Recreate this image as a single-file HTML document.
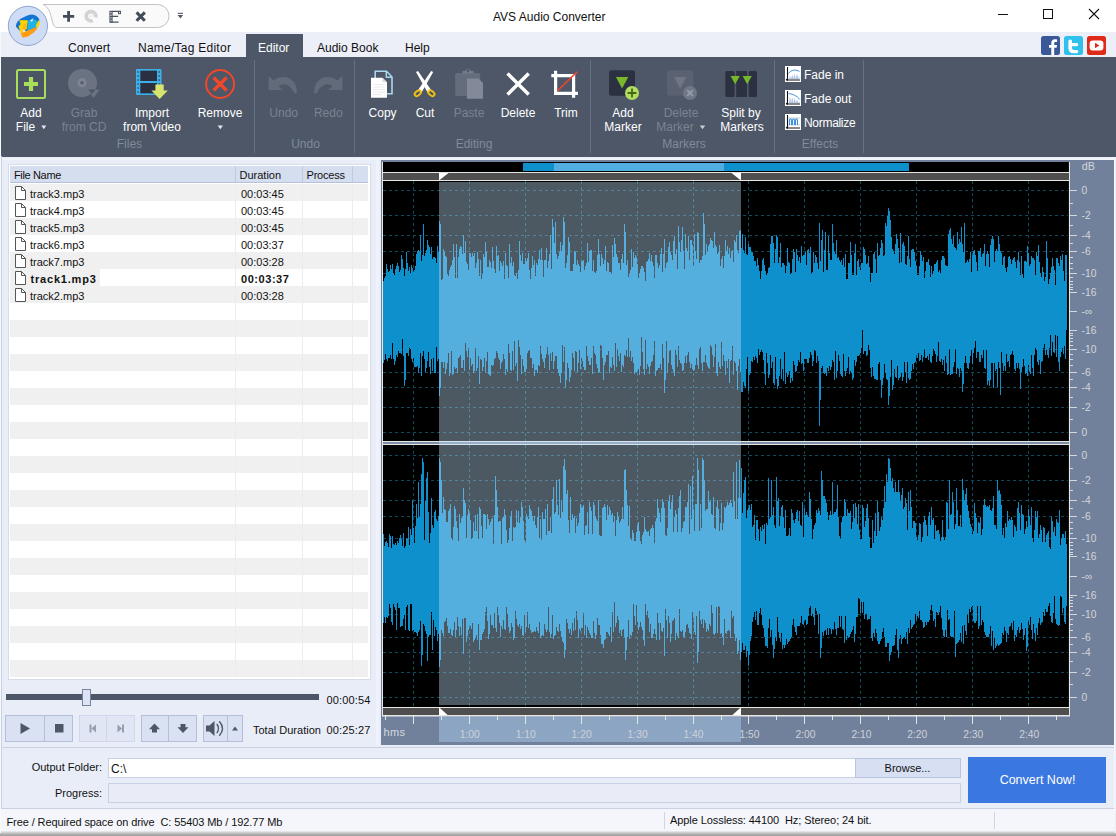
<!DOCTYPE html>
<html lang="en">
<head>
<meta charset="utf-8">
<title>AVS Audio Converter</title>
<style>
html,body{margin:0;padding:0;}
body{width:1116px;height:836px;overflow:hidden;background:#e9edf8;font-family:"Liberation Sans",sans-serif;font-size:11px;color:#111;position:relative;}
.abs{position:absolute;}
.t{position:absolute;white-space:nowrap;line-height:14px;}
#titlebar{left:0;top:0;width:1116px;height:32px;background:#ffffff;}
#tabbar{left:0;top:32px;width:1116px;height:25px;background:#eceef8;}
#ribbon{left:1px;top:57px;width:1115px;height:99.5px;background:#4d5767;}
.tab{position:absolute;top:41px;font-size:12px;line-height:14px;color:#111;white-space:nowrap;}
.rl{position:absolute;font-size:12px;line-height:14px;color:#fff;text-align:center;white-space:nowrap;transform:translateX(-50%);}
.rl.dis{color:#7b8291;}
.grp{position:absolute;top:137px;font-size:12px;line-height:14px;color:#828a9b;transform:translateX(-50%);white-space:nowrap;}
.sep{position:absolute;top:60px;width:1px;height:93px;background:#677082;}
.btn{position:absolute;top:715px;height:25px;background:#dae1f3;border:1px solid #b4bfdc;box-sizing:content-box;}
</style>
</head>
<body>
<div id="titlebar" class="abs"></div>
<div id="tabbar" class="abs"></div>
<div class="t" style="left:493px;top:9px;font-size:12px;line-height:16px;color:#111;">AVS Audio Converter</div>
<!-- window controls -->
<svg class="abs" style="left:990px;top:0" width="126" height="32" viewBox="0 0 126 32">
  <rect x="8" y="14" width="10" height="1" fill="#111"/>
  <rect x="53.5" y="9.5" width="9" height="9" fill="none" stroke="#111" stroke-width="1"/>
  <path d="M99 9 L109 19 M109 9 L99 19" stroke="#111" stroke-width="1.1" fill="none"/>
</svg>
<!-- quick access pill -->
<svg class="abs" style="left:0;top:0" width="200" height="58" viewBox="0 0 200 58">
  <path d="M43 4.5 H157.5 A11.5 11.5 0 0 1 157.5 27.5 H57 C52.8 27.5 52.6 21 50 12.6 C48.6 8.6 46 5.5 43 4.5 Z" fill="#fafafa" stroke="#c2c2c2" stroke-width="1"/>
  <!-- plus -->
  <path d="M63 16.4 H74.2 M68.6 11 V21.8" stroke="#444b59" stroke-width="2.8" fill="none"/>
  <!-- cd disabled -->
  <circle cx="91" cy="16.2" r="4.7" fill="none" stroke="#d3d3d3" stroke-width="3.8"/>
  <circle cx="91" cy="16.2" r="1" fill="#dcdcdc"/>
  <path d="M91 16.2 L99 18.2 L94.5 24.5 Z" fill="#fafafa"/>
  <!-- film -->
  <rect x="109.4" y="10.8" width="3.2" height="12" fill="#4a5161"/>
  <g fill="#e8e8ea"><rect x="110.3" y="12" width="1.3" height="1.3"/><rect x="110.3" y="14.6" width="1.3" height="1.3"/><rect x="110.3" y="17.2" width="1.3" height="1.3"/><rect x="110.3" y="19.8" width="1.3" height="1.3"/></g>
  <path d="M112 11.4 H120.6 M112 16.4 H118 M112 22.2 H118.6" stroke="#4a5161" stroke-width="1.2" fill="none"/>
  <rect x="118" y="11" width="3" height="3.2" fill="#4a5161"/>
  <rect x="119" y="12" width="1.1" height="1.2" fill="#e8e8ea"/>
  <!-- x -->
  <path d="M136.6 12.4 L144.8 20.8 M144.8 12.4 L136.6 20.8" stroke="#444b59" stroke-width="3" fill="none"/>
  <!-- dropdown -->
  <rect x="177.8" y="12.8" width="5.2" height="1.1" fill="#555b68"/>
  <path d="M177.6 15 H183.2 L180.4 18.6 Z" fill="#555b68"/>
  <!-- app button -->
  <circle cx="27.9" cy="25.9" r="19.6" fill="#cfdcf5" stroke="#8fa4c9" stroke-width="1"/>
  <path d="M16 26.8 C15.6 22 20 18.6 24.2 17 C27 15.2 29.4 14.4 31.8 14.4 C34.2 14.4 36 15.4 36.9 16.6 C38.4 17.6 39.2 18.8 39.4 20.2 L36 27.4 L27 31 L19.4 30.4 Z" fill="#1274d3"/>
  <path d="M28 20.9 L32.4 18.7 L37.7 20.9 L36 27.2 L27.2 30.6 Z" fill="#1fb4e8"/>
  <path d="M30.2 20.6 L33.4 18.2 L32 21.9 Z" fill="#eef6fb"/>
  <path d="M19.2 20.3 L27.8 20.2 L26.8 28.8 L23 32.2 L21 34.2 L18.6 26.5 L20.6 24 Z" fill="#ffd500"/>
  <path d="M20.7 33.8 L22.9 32.4 L27.2 30.7 L36 27.3 L37.7 28.3 L34.1 32.2 L28.1 36.4 L22.6 37.8 Z" fill="#ff9c10"/>
  <path d="M23.6 24 L26.9 23.6 L26.6 28.8 L23 32.2 L21.4 33.4 Z" fill="#ffb90a"/>
  <path d="M35.8 25.4 L38.4 20.4 L40.1 21 L39.4 25.2 L37.6 27.9 Z" fill="#ffd500"/>
  <path d="M22.2 31.8 L23.8 29 L25.2 31.7 Z" fill="#eef0ea"/>
</svg>
<!-- tabs -->
<div class="abs" style="left:246px;top:34px;width:57px;height:23px;background:#4d5767;"></div>
<div class="tab" style="left:68px;">Convert</div>
<div class="tab" style="left:138px;letter-spacing:0.25px;">Name/Tag Editor</div>
<div class="tab" style="left:258px;color:#fff;">Editor</div>
<div class="tab" style="left:317px;">Audio Book</div>
<div class="tab" style="left:405px;">Help</div>
<!-- social -->
<svg class="abs" style="left:1040px;top:35px" width="70" height="22" viewBox="0 0 70 22">
  <rect x="1" y="1" width="19" height="19" rx="2.5" fill="#3b5998"/>
  <path d="M14.2 20 V12.8 H16.6 L17 10 H14.2 V8.4 C14.2 7.5 14.6 7 15.6 7 H17.1 V4.4 C16.6 4.3 15.8 4.2 14.9 4.2 C12.7 4.2 11.3 5.5 11.3 7.9 V10 H9 V12.8 H11.3 V20 Z" fill="#fff"/>
  <rect x="24" y="1" width="19" height="19" rx="2.5" fill="#2fc1ee"/>
  <path d="M30 4.5 C31.2 4.5 32 5.3 32 6.5 V8 H36.5 C37.6 8 38.3 8.7 38.3 9.6 C38.3 10.5 37.6 11.2 36.5 11.2 H32 V13 C32 14.3 32.8 15 34 15 H36.5 C37.6 15 38.3 15.7 38.3 16.6 C38.3 17.5 37.6 18.2 36.5 18.2 H33.6 C30.4 18.2 28.4 16.4 28.4 13.2 V6.5 C28.4 5.3 29 4.5 30 4.5 Z" fill="#fff"/>
  <rect x="47" y="1" width="19" height="19" rx="2.5" fill="#de2a16"/>
  <rect x="49.6" y="5.6" width="13.8" height="9.8" rx="3" fill="#fff"/>
  <path d="M55 7.8 L59.4 10.5 L55 13.2 Z" fill="#de2a16"/>
</svg>
<div id="ribbon" class="abs" style="border-radius:0 0 0 1.5px;"></div>
<div class="sep" style="left:254px;"></div>
<div class="sep" style="left:354px;"></div>
<div class="sep" style="left:590px;"></div>
<div class="sep" style="left:774px;"></div>
<div class="sep" style="left:863px;"></div>
<svg class="abs" style="left:0;top:57px" width="900" height="99" viewBox="0 57 900 99">
  <!-- Add File -->
  <rect x="17" y="70" width="28" height="28" rx="1.5" fill="#4b5565" stroke="#a9de5c" stroke-width="2"/>
  <path d="M24 84 H38 M31 77 V91" stroke="#a9de5c" stroke-width="4.2" fill="none"/>
  <!-- Grab from CD (disabled) -->
  <path d="M82 69 A14 14 0 1 0 91.5 93.2 L88 89.5 L99.5 89.5 L93.5 98 L91 94.5 A14 14 0 0 0 82 69 Z" fill="#6b7383"/>
  <circle cx="82" cy="82.7" r="4.6" fill="#7d8595"/>
  <circle cx="82" cy="82.7" r="1.7" fill="#555d6e"/>
  <!-- Import from Video -->
  <rect x="136" y="69" width="25.5" height="26" rx="1" fill="#3eb1ea"/>
  <rect x="140.3" y="70.6" width="16.7" height="10.4" fill="#2a3040"/>
  <rect x="140.3" y="83" width="16.7" height="10.4" fill="#2a3040"/>
  <g fill="#2f6f95">
    <rect x="137.3" y="71" width="1.6" height="2"/><rect x="137.3" y="75" width="1.6" height="2"/><rect x="137.3" y="79" width="1.6" height="2"/><rect x="137.3" y="83" width="1.6" height="2"/><rect x="137.3" y="87" width="1.6" height="2"/><rect x="137.3" y="91" width="1.6" height="2"/>
    <rect x="158.4" y="71" width="1.6" height="2"/><rect x="158.4" y="75" width="1.6" height="2"/><rect x="158.4" y="79" width="1.6" height="2"/><rect x="158.4" y="83" width="1.6" height="2"/>
  </g>
  <path d="M155.4 84.4 H163.7 V90.6 H167.8 L159.6 99 L151.4 90.6 H155.4 Z" fill="#d9e46f"/>
  <!-- Remove -->
  <circle cx="220.1" cy="84" r="14" fill="none" stroke="#f1472a" stroke-width="2"/>
  <path d="M213.6 77.5 L226.6 90.5 M226.6 77.5 L213.6 90.5" stroke="#f1472a" stroke-width="3.4" fill="none"/>
  <!-- Undo / Redo (disabled) -->
  <path d="M268.6 76 L268.6 90 L283 90 L278.5 86.3 C283 82.5 289.5 84 293.5 92 C296 95 297 94 296.8 90 C296 79 284 72.5 273.5 80.5 Z" fill="#636b7b"/>
  <path d="M342.4 76 L342.4 90 L328 90 L332.5 86.3 C328 82.5 321.5 84 317.5 92 C315 95 314 94 314.2 90 C315 79 327 72.5 337.5 80.5 Z" fill="#636b7b"/>
  <!-- Copy -->
  <path d="M375.2 71.2 H386.5 L392 77 V93.7 H375.2 Z" fill="#4d5767" stroke="#a9d8f0" stroke-width="1.6"/>
  <path d="M386.3 71.5 V77.2 H391.8" fill="none" stroke="#a9d8f0" stroke-width="1.4"/>
  <path d="M371 77.7 H382.5 L387 82.3 V97.8 H371 Z" fill="#ffffff"/>
  <path d="M382.5 77.7 V82.3 H387 Z" fill="#d6dbe4"/>
  <g stroke="#e3e6ec" stroke-width="0.8"><path d="M373 84.5 H385 M373 87 H385 M373 89.5 H385 M373 92 H385 M373 94.5 H381"/></g>
  <!-- Cut -->
  <path d="M416 71.9 L418 71.1 L431.3 90.2 L427.6 92.5 Z" fill="#ffffff"/>
  <path d="M433.2 71.9 L431.2 71.1 L417.9 90.2 L421.6 92.5 Z" fill="#ffffff"/>
  <ellipse cx="417.8" cy="93.2" rx="2.2" ry="3.6" transform="rotate(50 417.8 93.2)" fill="none" stroke="#f2c20f" stroke-width="1.9"/>
  <ellipse cx="431.4" cy="93.2" rx="2.2" ry="3.6" transform="rotate(-50 431.4 93.2)" fill="none" stroke="#f2c20f" stroke-width="1.9"/>
  <!-- Paste (disabled) -->
  <rect x="455.2" y="73" width="25" height="23" rx="1.5" fill="#656d7d"/>
  <path d="M462.5 73.5 V71 H465 A3.2 3.2 0 0 1 471 71 H473.5 V73.5 Z" fill="#747c8c"/>
  <circle cx="468" cy="70.8" r="1.4" fill="#4d5767"/>
  <path d="M467 78.5 H478.5 L483 83 V98.7 H467 Z" fill="#828a9a"/>
  <!-- Delete -->
  <path d="M507.5 73.5 L528.7 94.5 M528.7 73.5 L507.5 94.5" stroke="#ffffff" stroke-width="3.4" fill="none"/>
  <!-- Trim -->
  <path d="M555.6 70.8 V93.4 H577.9 M551.3 75.7 H573.6 V97.8" stroke="#ffffff" stroke-width="3.2" fill="none"/>
  <path d="M557.6 90.6 L577.2 71.8" stroke="#f1452a" stroke-width="1.5" fill="none"/>
  <!-- Add marker -->
  <rect x="609" y="70.3" width="26" height="25.5" rx="2.2" fill="#2b3141"/>
  <path d="M615.9 77 H628.3 L622.1 88.5 Z" fill="#77b82a"/>
  <circle cx="632" cy="93" r="7" fill="#b3dc63"/>
  <path d="M627.6 93 H636.4 M632 88.6 V97.4" stroke="#3f6a12" stroke-width="1.8" fill="none"/>
  <!-- Delete marker (disabled) -->
  <rect x="667" y="70.3" width="26.5" height="25.5" rx="2.2" fill="#5a6272"/>
  <path d="M674 77 H686.4 L680.2 88.5 Z" fill="#6e7686"/>
  <circle cx="690" cy="93" r="7" fill="#6f7787"/>
  <path d="M687.2 90.2 L692.8 95.8 M692.8 90.2 L687.2 95.8" stroke="#959cab" stroke-width="1.8" fill="none"/>
  <!-- Split by markers -->
  <rect x="725.3" y="71" width="9.2" height="26" rx="1.5" fill="#2b3141"/>
  <rect x="736.2" y="71" width="10.8" height="26" fill="#2b3141"/>
  <rect x="748.7" y="71" width="8.3" height="26" rx="1.5" fill="#2b3141"/>
  <path d="M730.6 76 H739.8 L735.2 84.3 Z" fill="#77b82a"/>
  <path d="M742.6 76 H751.8 L747.2 84.3 Z" fill="#77b82a"/>
  <!-- Effects icons -->
  <g>
    <rect x="785" y="66" width="16" height="16" fill="#ffffff"/>
    <path d="M787.5 67 V80 H800" stroke="#111" stroke-width="1.1" fill="none"/>
    <path d="M785.7 79.8 L787.5 78 V81.5 Z" fill="#111"/>
    <path d="M788.5 73.5 C791 69.5 796 69.3 799.5 71.5" stroke="#3f8fe0" stroke-width="1" fill="none"/>
    <path d="M789 79 L790 76 L791 79 L792.2 74.5 L793.4 79 L794.6 73.5 L795.8 79 L797 73.5 L798.2 79 L799 75 L799.5 79 Z" fill="#a9c3e6"/>
  </g>
  <g>
    <rect x="785" y="90" width="16" height="16" fill="#ffffff"/>
    <path d="M787.5 91 V104 H800" stroke="#111" stroke-width="1.1" fill="none"/>
    <path d="M785.7 103.8 L787.5 102 V105.5 Z" fill="#111"/>
    <path d="M788.5 93.5 C792 94 797 95.5 799.8 99.5" stroke="#3f8fe0" stroke-width="1" fill="none"/>
    <path d="M789 103 L790 96 L791 103 L792.2 97 L793.4 103 L794.6 98 L795.8 103 L797 99.5 L798.2 103 L799 101 L799.5 103 Z" fill="#a9c3e6"/>
  </g>
  <g>
    <rect x="785" y="114" width="16" height="16" fill="#ffffff"/>
    <path d="M787.5 115 V128 H800" stroke="#111" stroke-width="1.1" fill="none"/>
    <path d="M785.7 127.8 L787.5 126 V129.5 Z" fill="#111"/>
    <path d="M788.5 118 H800 M788.5 125 H800" stroke="#8a8a8a" stroke-width="0.7" stroke-dasharray="1.2 0.8" fill="none"/>
    <path d="M789.5 125 V120 Q790.5 117.5 791.5 120 V125 M792.5 125 V120 Q793.5 117.5 794.5 120 V125 M795.5 125 V120 Q796.5 117.5 797.5 120 V125" stroke="#3f8fe0" stroke-width="1.1" fill="none"/>
  </g>
  <!-- dropdown arrows -->
  <path d="M41.3 125.4 H46.3 L43.8 129.2 Z" fill="#e6e8ee"/>
  <path d="M217.7 125.4 H222.9 L220.3 129.2 Z" fill="#e6e8ee"/>
  <path d="M699.8 125.4 H705.2 L702.5 129.2 Z" fill="#c9cdd6"/>
</svg>
<div class="rl" style="left:31px;top:106px;">Add</div>
<div class="rl" style="left:25.5px;top:120px;">File</div>
<div class="rl dis" style="left:84px;top:106px;">Grab</div>
<div class="rl dis" style="left:84px;top:120px;">from CD</div>
<div class="rl" style="left:152px;top:106px;">Import</div>
<div class="rl" style="left:152px;top:120px;">from Video</div>
<div class="rl" style="left:220px;top:106px;">Remove</div>
<div class="rl dis" style="left:283.7px;top:106px;">Undo</div>
<div class="rl dis" style="left:328.3px;top:106px;">Redo</div>
<div class="rl" style="left:382.6px;top:106px;">Copy</div>
<div class="rl" style="left:425px;top:106px;">Cut</div>
<div class="rl dis" style="left:469px;top:106px;">Paste</div>
<div class="rl" style="left:518px;top:106px;">Delete</div>
<div class="rl" style="left:566px;top:106px;">Trim</div>
<div class="rl" style="left:623px;top:106px;">Add</div>
<div class="rl" style="left:623px;top:120px;">Marker</div>
<div class="rl dis" style="left:681px;top:106px;">Delete</div>
<div class="rl dis" style="left:675px;top:120px;">Marker</div>
<div class="rl" style="left:741px;top:106px;">Split by</div>
<div class="rl" style="left:742px;top:120px;">Markers</div>
<div class="rl" style="left:804px;top:68px;transform:none;">Fade in</div>
<div class="rl" style="left:804px;top:92px;transform:none;">Fade out</div>
<div class="rl" style="left:804px;top:116px;transform:none;letter-spacing:-0.3px;">Normalize</div>
<div class="grp" style="left:129.4px;">Files</div>
<div class="grp" style="left:305.5px;">Undo</div>
<div class="grp" style="left:474px;">Editing</div>
<div class="grp" style="left:684px;">Markers</div>
<div class="grp" style="left:820px;">Effects</div>
<!-- file list -->
<div class="abs" style="left:8px;top:164px;width:363px;height:516px;background:#d7dceb;"></div>
<div class="abs" style="left:9px;top:165px;width:361px;height:514px;background:#ffffff;"></div>
<div class="abs" style="left:376px;top:160px;width:3px;height:585px;background:#eff2fa;"></div>
<div class="abs" style="left:10px;top:166px;width:358px;height:16px;background:#d5deef;border-bottom:1px solid #b4c0dc;"></div>
<div class="abs" style="left:10px;top:184px;width:358px;height:17px;background:#f0f0f0;"></div>
<div class="abs" style="left:10px;top:201px;width:358px;height:17px;background:#ffffff;"></div>
<div class="abs" style="left:10px;top:218px;width:358px;height:17px;background:#f0f0f0;"></div>
<div class="abs" style="left:10px;top:235px;width:358px;height:17px;background:#ffffff;"></div>
<div class="abs" style="left:10px;top:252px;width:358px;height:17px;background:#f0f0f0;"></div>
<div class="abs" style="left:10px;top:269px;width:358px;height:17px;background:#ffffff;"></div>
<div class="abs" style="left:10px;top:286px;width:358px;height:17px;background:#f0f0f0;"></div>
<div class="abs" style="left:10px;top:303px;width:358px;height:17px;background:#ffffff;"></div>
<div class="abs" style="left:10px;top:320px;width:358px;height:17px;background:#f0f0f0;"></div>
<div class="abs" style="left:10px;top:337px;width:358px;height:17px;background:#ffffff;"></div>
<div class="abs" style="left:10px;top:354px;width:358px;height:17px;background:#f0f0f0;"></div>
<div class="abs" style="left:10px;top:371px;width:358px;height:17px;background:#ffffff;"></div>
<div class="abs" style="left:10px;top:388px;width:358px;height:17px;background:#f0f0f0;"></div>
<div class="abs" style="left:10px;top:405px;width:358px;height:17px;background:#ffffff;"></div>
<div class="abs" style="left:10px;top:422px;width:358px;height:17px;background:#f0f0f0;"></div>
<div class="abs" style="left:10px;top:439px;width:358px;height:17px;background:#ffffff;"></div>
<div class="abs" style="left:10px;top:456px;width:358px;height:17px;background:#f0f0f0;"></div>
<div class="abs" style="left:10px;top:473px;width:358px;height:17px;background:#ffffff;"></div>
<div class="abs" style="left:10px;top:490px;width:358px;height:17px;background:#f0f0f0;"></div>
<div class="abs" style="left:10px;top:507px;width:358px;height:17px;background:#ffffff;"></div>
<div class="abs" style="left:10px;top:524px;width:358px;height:17px;background:#f0f0f0;"></div>
<div class="abs" style="left:10px;top:541px;width:358px;height:17px;background:#ffffff;"></div>
<div class="abs" style="left:10px;top:558px;width:358px;height:17px;background:#f0f0f0;"></div>
<div class="abs" style="left:10px;top:575px;width:358px;height:17px;background:#ffffff;"></div>
<div class="abs" style="left:10px;top:592px;width:358px;height:17px;background:#f0f0f0;"></div>
<div class="abs" style="left:10px;top:609px;width:358px;height:17px;background:#ffffff;"></div>
<div class="abs" style="left:10px;top:626px;width:358px;height:17px;background:#f0f0f0;"></div>
<div class="abs" style="left:10px;top:643px;width:358px;height:17px;background:#ffffff;"></div>
<div class="abs" style="left:10px;top:660px;width:358px;height:17px;background:#f0f0f0;"></div>
<div class="abs" style="left:10px;top:269px;width:90px;height:17px;background:#f0f0f0;"></div>
<div class="abs" style="left:235px;top:166px;width:1px;height:16px;background:#bfc9e2;"></div>
<div class="abs" style="left:235px;top:184px;width:1px;height:493px;background:#ececee;"></div>
<div class="abs" style="left:302px;top:166px;width:1px;height:16px;background:#bfc9e2;"></div>
<div class="abs" style="left:302px;top:184px;width:1px;height:493px;background:#ececee;"></div>
<div class="abs" style="left:352px;top:166px;width:1px;height:16px;background:#bfc9e2;"></div>
<div class="abs" style="left:352px;top:184px;width:1px;height:493px;background:#ececee;"></div>
<div class="t" style="left:14px;top:168px;letter-spacing:-0.35px;">File Name</div>
<div class="t" style="left:239.5px;top:168px;">Duration</div>
<div class="t" style="left:306.5px;top:168px;letter-spacing:-0.2px;">Process</div>
<svg class="abs" style="left:15px;top:186px" width="11" height="14" viewBox="0 0 11 14"><path d="M0.5 0.5 H6.5 L10.5 4.5 V13.5 H0.5 Z" fill="#fff" stroke="#555" stroke-width="1"/><path d="M6.5 0.5 V4.5 H10.5" fill="none" stroke="#555" stroke-width="1"/></svg>
<div class="t" style="left:30px;top:187px;">track3.mp3</div>
<div class="t" style="left:241px;top:187px;">00:03:45</div>
<svg class="abs" style="left:15px;top:203px" width="11" height="14" viewBox="0 0 11 14"><path d="M0.5 0.5 H6.5 L10.5 4.5 V13.5 H0.5 Z" fill="#fff" stroke="#555" stroke-width="1"/><path d="M6.5 0.5 V4.5 H10.5" fill="none" stroke="#555" stroke-width="1"/></svg>
<div class="t" style="left:30px;top:204px;">track4.mp3</div>
<div class="t" style="left:241px;top:204px;">00:03:45</div>
<svg class="abs" style="left:15px;top:220px" width="11" height="14" viewBox="0 0 11 14"><path d="M0.5 0.5 H6.5 L10.5 4.5 V13.5 H0.5 Z" fill="#fff" stroke="#555" stroke-width="1"/><path d="M6.5 0.5 V4.5 H10.5" fill="none" stroke="#555" stroke-width="1"/></svg>
<div class="t" style="left:30px;top:221px;">track5.mp3</div>
<div class="t" style="left:241px;top:221px;">00:03:45</div>
<svg class="abs" style="left:15px;top:237px" width="11" height="14" viewBox="0 0 11 14"><path d="M0.5 0.5 H6.5 L10.5 4.5 V13.5 H0.5 Z" fill="#fff" stroke="#555" stroke-width="1"/><path d="M6.5 0.5 V4.5 H10.5" fill="none" stroke="#555" stroke-width="1"/></svg>
<div class="t" style="left:30px;top:238px;">track6.mp3</div>
<div class="t" style="left:241px;top:238px;">00:03:37</div>
<svg class="abs" style="left:15px;top:254px" width="11" height="14" viewBox="0 0 11 14"><path d="M0.5 0.5 H6.5 L10.5 4.5 V13.5 H0.5 Z" fill="#fff" stroke="#555" stroke-width="1"/><path d="M6.5 0.5 V4.5 H10.5" fill="none" stroke="#555" stroke-width="1"/></svg>
<div class="t" style="left:30px;top:255px;">track7.mp3</div>
<div class="t" style="left:241px;top:255px;">00:03:28</div>
<svg class="abs" style="left:15px;top:271px" width="11" height="14" viewBox="0 0 11 14"><path d="M0.5 0.5 H6.5 L10.5 4.5 V13.5 H0.5 Z" fill="#fff" stroke="#555" stroke-width="1"/><path d="M6.5 0.5 V4.5 H10.5" fill="none" stroke="#555" stroke-width="1"/></svg>
<div class="t" style="left:30.5px;top:272px;font-weight:bold;letter-spacing:0.8px;">track1.mp3</div>
<div class="t" style="left:241px;top:272px;font-weight:bold;letter-spacing:0.55px;">00:03:37</div>
<svg class="abs" style="left:15px;top:288px" width="11" height="14" viewBox="0 0 11 14"><path d="M0.5 0.5 H6.5 L10.5 4.5 V13.5 H0.5 Z" fill="#fff" stroke="#555" stroke-width="1"/><path d="M6.5 0.5 V4.5 H10.5" fill="none" stroke="#555" stroke-width="1"/></svg>
<div class="t" style="left:30px;top:289px;">track2.mp3</div>
<div class="t" style="left:241px;top:289px;">00:03:28</div>
<!-- slider -->
<div class="abs" style="left:6px;top:694px;width:313px;height:6px;background:#4d5767;"></div>
<div class="abs" style="left:82px;top:689px;width:7px;height:15px;background:#dde4f5;border:1px solid #77839f;"></div>
<div class="t" style="left:326.5px;top:693px;letter-spacing:0.15px;">00:00:54</div>
<div class="t" style="left:253px;top:723px;">Total Duration</div>
<div class="t" style="left:326.5px;top:723px;letter-spacing:0.15px;">00:25:27</div>
<!-- buttons -->
<div class="btn" style="left:5px;width:38px;"></div>
<div class="btn" style="left:44px;width:27px;"></div>
<div class="btn" style="left:79px;width:26px;background:#e1e6f4;border-color:#d0d7ea;"></div>
<div class="btn" style="left:106px;width:26.5px;background:#e1e6f4;border-color:#d0d7ea;"></div>
<div class="btn" style="left:141px;width:26px;"></div>
<div class="btn" style="left:168px;width:27px;"></div>
<div class="btn" style="left:203px;width:23px;"></div>
<div class="btn" style="left:227px;width:14px;"></div>
<svg class="abs" style="left:0;top:710px" width="250" height="36" viewBox="0 710 250 36">
  <path d="M20.5 723 V734 L30 728.5 Z" fill="#4d5767"/>
  <rect x="55" y="724" width="8.5" height="8.5" fill="#4d5767"/>
  <path d="M89.5 724.5 H91.5 V732.5 H89.5 Z M96 724.5 V732.5 L91.5 728.5 Z" fill="#979eb1"/>
  <path d="M122 724.5 H124 V732.5 H122 Z M117.5 724.5 V732.5 L122 728.5 Z" fill="#979eb1"/>
  <path d="M154.5 723.5 L160 729.2 H157 V732.5 H152 V729.2 H149 Z" fill="#4d5767"/>
  <path d="M183 733 L188.5 727.3 H185.5 V724 H180.5 V727.3 H177.5 Z" fill="#4d5767"/>
  <path d="M206 725.5 H209.5 L214.5 721 V736 L209.5 731.5 H206 Z" fill="#4d5767"/>
  <path d="M216.8 724 Q220.2 728.5 216.8 733 M219.3 721.2 Q225.6 728.5 219.3 735.8" stroke="#4d5767" stroke-width="1.4" fill="none"/>
  <path d="M232 730.5 H238 L235 726.5 Z" fill="#4d5767"/>
</svg>
<!-- bottom panel -->
<div class="abs" style="left:2px;top:747px;width:1112px;height:1px;background:#c9d0e2;"></div>
<div class="abs" style="left:2px;top:808px;width:1112px;height:1px;background:#c9d0e2;"></div>
<div class="t" style="right:1014px;top:760px;font-size:11px;">Output Folder:</div>
<div class="t" style="right:1014px;top:786px;font-size:11px;">Progress:</div>
<div class="abs" style="left:108px;top:758px;width:746px;height:18px;background:#fff;border:1px solid #c9d0e4;"></div>
<div class="t" style="left:111px;top:762px;font-size:12px;">C:\</div>
<div class="abs" style="left:855px;top:758px;width:104px;height:18px;background:#d7dff2;border:1px solid #b9c4e0;"></div>
<div class="t" style="left:907.5px;top:761px;transform:translateX(-50%);">Browse...</div>
<div class="abs" style="left:108px;top:783px;width:851px;height:18px;background:#e9ecf6;border:1px solid #c9d0e4;"></div>
<div class="abs" style="left:968px;top:757px;width:138px;height:46px;background:#3a77e0;"></div>
<div class="t" style="left:1037.5px;top:773px;transform:translateX(-50%);font-size:12.5px;color:#fff;">Convert Now!</div>
<!-- status bar -->
<div class="abs" style="left:0;top:809px;width:1116px;height:24px;background:#f5f6fb;"></div>
<div class="abs" style="left:0;top:831px;width:1116px;height:5px;background:linear-gradient(#eeeef1,#b8b8ba 55%,#9a9a9a);"></div>
<div class="abs" style="left:664px;top:812px;width:1px;height:17px;background:#d2d6e4;"></div>
<div class="abs" style="left:994px;top:812px;width:1px;height:17px;background:#d2d6e4;"></div>
<div class="t" style="left:6.5px;top:815px;font-size:11px;letter-spacing:-0.1px;">Free / Required space on drive&nbsp; C: 55403 Mb / 192.77 Mb</div>
<div class="t" style="left:670px;top:813px;font-size:11px;letter-spacing:-0.08px;">Apple Lossless: 44100&nbsp; Hz; Stereo; 24 bit.</div>
<!-- window side borders -->
<div class="abs" style="left:2px;top:157px;width:1112px;height:3px;background:linear-gradient(#e9ecf7,#f4f6fc);"></div>
<div class="abs" style="left:0;top:32px;width:1px;height:801px;background:#f8f9fd;"></div>
<div class="abs" style="left:1px;top:156px;width:1px;height:653px;background:#c9d0e2;"></div>
<div class="abs" style="left:1114px;top:157px;width:1px;height:652px;background:#f6f7fc;"></div>
<div class="abs" style="left:1115px;top:157px;width:1px;height:676px;background:#eef0f8;"></div>
<!-- waveform editor -->
<svg class="abs" style="left:381px;top:160px" width="733" height="585" viewBox="381 160 733 585" shape-rendering="crispEdges" font-family="Liberation Sans, sans-serif">
<rect x="381" y="160" width="733" height="585" fill="#71819c"/>
<rect x="382" y="162" width="688" height="554" fill="#e8e6e2"/>
<rect x="1068" y="162" width="1" height="554" fill="#141414"/>
<rect x="1068" y="172" width="1" height="1" fill="#e8e6e2"/>
<rect x="1068" y="173" width="1" height="7" fill="#4f4f4f"/>
<rect x="1068" y="180" width="1" height="1" fill="#e8e6e2"/>
<rect x="1068" y="441" width="1" height="1" fill="#e6e4e0"/>
<rect x="1068" y="442" width="1" height="2" fill="#7f8eab"/>
<rect x="1068" y="444" width="1" height="1" fill="#e6e4e0"/>
<rect x="1068" y="707" width="1" height="1" fill="#e8e6e2"/>
<rect x="1068" y="708" width="1" height="7" fill="#4f4f4f"/>
<rect x="1068" y="715" width="1" height="1" fill="#e8e6e2"/>
<rect x="383" y="162" width="685" height="10" fill="#000"/>
<rect x="523" y="163" width="386" height="8" fill="#0e90cd"/>
<rect x="554" y="163" width="170" height="8" fill="#52aee1"/>
<rect x="383" y="173" width="685" height="7" fill="#4f4f4f"/>
<rect x="383" y="181" width="685" height="260" fill="#000"/>
<rect x="383" y="441" width="685" height="4" fill="#e6e4e0"/>
<rect x="383" y="442" width="685" height="2" fill="#7f8eab"/>
<rect x="383" y="445" width="685" height="262" fill="#000"/>
<rect x="383" y="708" width="685" height="7" fill="#4f4f4f"/>
<path d="M383 190.5H1068M383 432.5H1068M383 215.5H1068M383 407.5H1068M383 235.5H1068M383 387.5H1068M383 251.5H1068M383 372.5H1068M383 273.5H1068M383 349.5H1068M383 455.5H1068M383 697.5H1068M383 480.5H1068M383 672.5H1068M383 500.5H1068M383 652.5H1068M383 516.5H1068M383 637.5H1068M383 538.5H1068M383 614.5H1068M413.5 181V441M413.5 445V707M469.5 181V441M469.5 445V707M525.5 181V441M525.5 445V707M581.5 181V441M581.5 445V707M637.5 181V441M637.5 445V707M693.5 181V441M693.5 445V707M748.5 181V441M748.5 445V707M804.5 181V441M804.5 445V707M860.5 181V441M860.5 445V707M916.5 181V441M916.5 445V707M972.5 181V441M972.5 445V707M1028.5 181V441M1028.5 445V707" stroke="#0e495d" stroke-width="1" stroke-dasharray="3 3" fill="none"/>
<path d="M383 281V281H384V278H385V276H386V264H387V269H388V272H389V271H390V265H391V269H392V264H393V273H394V275H395V269H396V266H397V263H398V266H399V272H400V270H401V255H402V259H403V268H404V276H405V269H406V252H407V263H408V271H409V267H410V273H411V265H412V268H413V272H414V270H415V266H416V254H417V251H418V250H419V251H420V235H421V261H422V255H423V224H424V256H425V253H426V250H427V240H428V245H429V247H430V254H431V247H432V259H433V257H434V257H435V258H436V263H437V246H438V252H439V221H440V224H441V280H442V279H443V249H444V252H445V256H446V257H447V274H448V276H449V270H450V267H451V265H452V260H453V244H454V257H455V278H456V244H457V278H458V257H459V249H460V246H461V247H462V254H463V235H464V253H465V241H466V262H467V264H468V270H469V253H470V253H471V257H472V253H473V256H474V253H475V268H476V263H477V252H478V259H479V276H480V260H481V279H482V274H483V254H484V257H485V242H486V252H487V267H488V267H489V260H490V262H491V268H492V247H493V261H494V269H495V273H496V246H497V256H498V255H499V271H500V261H501V263H502V266H503V261H504V279H505V253H506V265H507V266H508V278H509V244H510V263H511V257H512V266H513V262H514V275H515V276H516V273H517V279H518V270H519V241H520V255H521V261H522V253H523V264H524V264H525V258H526V261H527V258H528V253H529V270H530V279H531V268H532V256H533V265H534V260H535V276H536V263H537V265H538V259H539V250H540V260H541V248H542V260H543V277H544V260H545V260H546V248H547V268H548V261H549V254H550V235H551V269H552V219H553V227H554V243H555V222H556V254H557V259H558V256H559V252H560V242H561V251H562V245H563V217H564V222H565V268H566V263H567V255H568V237H569V242H570V271H571V271H572V271H573V264H574V251H575V252H576V265H577V260H578V264H579V266H580V272H581V261H582V261H583V260H584V270H585V266H586V263H587V243H588V262H589V251H590V250H591V250H592V271H593V260H594V272H595V273H596V271H597V255H598V239H599V254H600V266H601V254H602V258H603V264H604V260H605V246H606V271H607V262H608V263H609V272H610V272H611V274H612V245H613V257H614V238H615V244H616V254H617V257H618V263H619V263H620V270H621V259H622V254H623V263H624V224H625V232H626V265H627V260H628V277H629V274H630V270H631V249H632V267H633V252H634V258H635V255H636V257H637V264H638V278H639V273H640V269H641V266H642V266H643V268H644V272H645V281H646V262H647V261H648V259H649V253H650V261H651V255H652V262H653V266H654V278H655V255H656V255H657V263H658V268H659V265H660V254H661V248H662V272H663V254H664V239H665V268H666V263H667V262H668V247H669V242H670V252H671V255H672V260H673V241H674V236H675V254H676V249H677V269H678V226H679V242H680V252H681V240H682V227H683V251H684V269H685V234H686V248H687V251H688V236H689V260H690V240H691V240H692V245H693V266H694V234H695V251H696V259H697V232H698V233H699V263H700V260H701V260H702V256H703V213H704V224H705V255H706V244H707V252H708V246H709V244H710V238H711V240H712V241H713V248H714V232H715V245H716V247H717V254H718V252H719V245H720V266H721V259H722V256H723V268H724V256H725V240H726V251H727V246H728V254H729V248H730V258H731V251H732V250H733V262H734V240H735V242H736V235H737V250H738V253H739V231H740V230H741V248H742V234H743V250H744V253H745V237H746V254H747V255H748V244H749V247H750V247H751V252H752V252H753V256H754V261H755V261H756V266H757V258H758V265H759V271H760V279H761V271H762V260H763V258H764V265H765V271H766V275H767V273H768V268H769V267H770V244H771V236H772V236H773V243H774V263H775V249H776V235H777V237H778V263H779V257H780V243H781V267H782V263H783V263H784V265H785V273H786V266H787V248H788V262H789V263H790V274H791V273H792V259H793V249H794V252H795V272H796V249H797V255H798V261H799V257H800V263H801V246H802V256H803V255H804V255H805V252H806V265H807V250H808V249H809V253H810V247H811V274H812V272H813V252H814V263H815V255H816V257H817V263H818V269H819V223H820V261H821V240H822V230H823V272H824V250H825V232H826V270H827V270H828V236H829V253H830V260H831V260H832V224H833V243H834V252H835V254H836V240H837V258H838V257H839V260H840V262H841V260H842V265H843V258H844V267H845V254H846V279H847V279H848V263H849V263H850V242H851V255H852V275H853V275H854V253H855V244H856V275H857V261H858V259H859V267H860V270H861V263H862V263H863V247H864V249H865V255H866V264H867V263H868V256H869V267H870V282H871V273H872V273H873V254H874V252H875V259H876V273H877V243H878V256H879V255H880V248H881V240H882V243H883V256H884V255H885V223H886V226H887V216H888V208H889V211H890V220H891V237H892V249H893V251H894V254H895V244H896V234H897V239H898V248H899V263H900V233H901V262H902V244H903V242H904V246H905V264H906V265H907V256H908V236H909V259H910V267H911V250H912V249H913V249H914V252H915V261H916V266H917V275H918V275H919V266H920V251H921V255H922V261H923V257H924V278H925V271H926V262H927V262H928V259H929V265H930V277H931V266H932V274H933V271H934V264H935V264H936V262H937V260H938V272H939V270H940V273H941V260H942V256H943V256H944V258H945V265H946V266H947V266H948V234H949V230H950V228H951V239H952V244H953V236H954V247H955V248H956V250H957V232H958V244H959V239H960V242H961V227H962V244H963V252H964V223H965V263H966V262H967V260H968V262H969V259H970V252H971V272H972V255H973V251H974V250H975V255H976V262H977V271H978V251H979V251H980V248H981V257H982V254H983V253H984V244H985V266H986V254H987V251H988V254H989V267H990V245H991V239H992V236H993V239H994V262H995V251H996V249H997V251H998V236H999V244H1000V251H1001V253H1002V265H1003V257H1004V256H1005V268H1006V272H1007V267H1008V257H1009V256H1010V259H1011V264H1012V260H1013V258H1014V257H1015V262H1016V268H1017V260H1018V252H1019V262H1020V275H1021V256H1022V274H1023V278H1024V261H1025V261H1026V262H1027V246H1028V253H1029V266H1030V264H1031V256H1032V258H1033V258H1034V260H1035V275H1036V252H1037V256H1038V245H1039V262H1040V273H1041V277H1042V267H1043V272H1044V281H1045V277H1046V241H1047V258H1048V284H1049V279H1050V273H1051V267H1052V258H1053V266H1054V270H1055V285H1056V258H1057V258H1058V263H1059V266H1060V256H1061V260H1062V254H1063V271H1064V281H1065V255H1066V255H1067V330H1066V359H1065V346H1064V354H1063V348H1062V352H1061V357H1060V371H1059V362H1058V336H1057V357H1056V335H1055V353H1054V352H1053V342H1052V356H1051V335H1050V348H1049V358H1048V355H1047V350H1046V355H1045V344H1044V348H1043V361H1042V362H1041V374H1040V360H1039V365H1038V362H1037V350H1036V348H1035V355H1034V376H1033V368H1032V355H1031V374H1030V372H1029V365H1028V376H1027V373H1026V374H1025V366H1024V359H1023V367H1022V372H1021V389H1020V369H1019V363H1018V368H1017V363H1016V371H1015V369H1014V355H1013V351H1012V354H1011V355H1010V367H1009V361H1008V362H1007V354H1006V371H1005V366H1004V371H1003V363H1002V352H1001V395H1000V368H999V362H998V387H997V369H996V371H995V363H994V388H993V363H992V363H991V380H990V386H989V381H988V385H987V350H986V369H985V368H984V350H983V358H982V355H981V362H980V362H979V352H978V352H977V358H976V341H975V348H974V353H973V364H972V350H971V356H970V363H969V369H968V368H967V363H966V356H965V363H964V384H963V392H962V371H961V368H960V377H959V369H958V368H957V374H956V349H955V362H954V367H953V374H952V374H951V375H950V349H949V374H948V375H947V363H946V356H945V371H944V360H943V365H942V359H941V362H940V361H939V342H938V356H937V362H936V354H935V351H934V349H933V356H932V363H931V362H930V354H929V360H928V356H927V358H926V358H925V349H924V357H923V362H922V355H921V360H920V361H919V353H918V358H917V355H916V362H915V363H914V369H913V364H912V371H911V379H910V380H909V378H908V362H907V383H906V372H905V362H904V377H903V381H902V373H901V377H900V378H899V380H898V366H897V378H896V377H895V369H894V385H893V390H892V360H891V377H890V396H889V405H888V380H887V379H886V373H885V364H884V378H883V385H882V398H881V380H880V362H879V364H878V380H877V380H876V379H875V379H874V376H873V367H872V377H871V368H870V350H869V345H868V355H867V356H866V351H865V351H864V354H863V330H862V348H861V353H860V355H859V356H858V356H857V362H856V366H855V360H854V378H853V380H852V373H851V371H850V374H849V357H848V368H847V371H846V376H845V371H844V354H843V377H842V376H841V374H840V361H839V355H838V371H837V378H836V351H835V380H834V362H833V360H832V367H831V370H830V366H829V371H828V368H827V376H826V373H825V374H824V373H823V366H822V368H821V400H820V426H819V361H818V356H817V363H816V351H815V350H814V361H813V366H812V355H811V352H810V358H809V363H808V363H807V359H806V359H805V359H804V371H803V363H802V364H801V352H800V362H799V360H798V366H797V371H796V372H795V365H794V361H793V381H792V378H791V383H790V371H789V375H788V377H787V373H786V384H785V352H784V381H783V369H782V379H781V359H780V376H779V386H778V389H777V379H776V357H775V385H774V383H773V362H772V368H771V355H770V375H769V378H768V363H767V353H766V385H765V374H764V360H763V352H762V350H761V352H760V355H759V349H758V363H757V358H756V356H755V360H754V357H753V362H752V361H751V373H750V375H749V391H748V357H747V369H746V388H745V386H744V382H743V392H742V392H741V372H740V359H739V366H738V390H737V371H736V363H735V361H734V375H733V346H732V360H731V361H730V383H729V359H728V368H727V361H726V375H725V361H724V355H723V366H722V342H721V369H720V367H719V362H718V376H717V373H716V344H715V357H714V367H713V355H712V347H711V345H710V369H709V368H708V366H707V363H706V355H705V362H704V362H703V371H702V363H701V347H700V349H699V369H698V365H697V358H696V365H695V370H694V371H693V369H692V364H691V368H690V362H689V352H688V355H687V363H686V356H685V363H684V370H683V371H682V364H681V363H680V360H679V346H678V367H677V355H676V350H675V376H674V372H673V369H672V365H671V350H670V351H669V363H668V373H667V341H666V380H665V393H664V358H663V344H662V370H661V364H660V368H659V368H658V370H657V371H656V376H655V341H654V355H653V361H652V362H651V366H650V374H649V367H648V364H647V369H646V340H645V375H644V369H643V352H642V337H641V366H640V375H639V369H638V371H637V372H636V372H635V374H634V363H633V357H632V361H631V351H630V357H629V338H628V357H627V350H626V356H625V355H624V367H623V365H622V372H621V353H620V361H619V356H618V349H617V367H616V343H615V371H614V365H613V357H612V368H611V367H610V373H609V351H608V355H607V355H606V362H605V365H604V380H603V358H602V346H601V345H600V372H599V373H598V368H597V364H596V355H595V353H594V346H593V374H592V358H591V365H590V365H589V361H588V356H587V346H586V370H585V370H584V367H583V361H582V358H581V369H580V350H579V363H578V372H577V352H576V351H575V371H574V358H573V353H572V370H571V377H570V382H569V368H568V363H567V380H566V388H565V347H564V362H563V345H562V373H561V383H560V376H559V373H558V369H557V356H556V356H555V361H554V369H553V352H552V361H551V353H550V370H549V355H548V347H547V354H546V358H545V368H544V362H543V359H542V354H541V346H540V366H539V365H538V373H537V370H536V370H535V376H534V364H533V368H532V358H531V358H530V350H529V351H528V353H527V369H526V372H525V372H524V366H523V359H522V374H521V355H520V347H519V340H518V381H517V363H516V366H515V341H514V370H513V351H512V371H511V370H510V353H509V344H508V372H507V369H506V375H505V359H504V354H503V361H502V363H501V369H500V360H499V358H498V353H497V351H496V358H495V359H494V365H493V366H492V365H491V376H490V375H489V374H488V352H487V361H486V372H485V358H484V367H483V371H482V360H481V359H480V384H479V356H478V368H477V371H476V348H475V371H474V373H473V364H472V366H471V358H470V370H469V348H468V357H467V351H466V343H465V371H464V360H463V368H462V368H461V355H460V357H459V358H458V373H457V368H456V369H455V367H454V374H453V375H452V351H451V373H450V376H449V353H448V363H447V369H446V374H445V362H444V368H443V362H442V362H441V388H440V396H439V359H438V361H437V347H436V373H435V373H434V358H433V371H432V359H431V374H430V367H429V352H428V361H427V368H426V372H425V359H424V351H423V356H422V376H421V353H420V368H419V373H418V366H417V367H416V367H415V367H414V358H413V362H412V359H411V349H410V348H409V356H408V353H407V353H406V380H405V386H404V356H403V339H402V354H401V353H400V353H399V351H398V357H397V355H396V361H395V365H394V359H393V343H392V359H391V355H390V358H389V358H388V361H387V359H386V354H385V360H384V363H383Z" fill="#0e90cd"/>
<path d="M383 534V534H384V546H385V542H386V541H387V543H388V547H389V534H390V536H391V548H392V536H393V544H394V545H395V543H396V545H397V541H398V543H399V538H400V535H401V539H402V546H403V533H404V548H405V546H406V538H407V539H408V527H409V545H410V529H411V535H412V500H413V528H414V543H415V526H416V504H417V518H418V482H419V517H420V504H421V474H422V458H423V462H424V540H425V501H426V478H427V472H428V512H429V543H430V533H431V498H432V525H433V528H434V512H435V510H436V519H437V521H438V516H439V458H440V462H441V480H442V513H443V497H444V509H445V510H446V522H447V522H448V511H449V509H450V504H451V538H452V540H453V527H454V506H455V509H456V521H457V528H458V541H459V514H460V523H461V518H462V517H463V488H464V500H465V503H466V538H467V515H468V509H469V513H470V520H471V539H472V538H473V522H474V531H475V515H476V531H477V514H478V539H479V507H480V509H481V526H482V538H483V514H484V514H485V515H486V529H487V514H488V519H489V525H490V522H491V519H492V518H493V544H494V515H495V476H496V490H497V507H498V522H499V521H500V521H501V544H502V518H503V517H504V509H505V515H506V530H507V543H508V540H509V528H510V517H511V511H512V541H513V527H514V528H515V527H516V510H517V522H518V511H519V523H520V517H521V502H522V507H523V521H524V540H525V543H526V514H527V517H528V519H529V505H530V509H531V511H532V516H533V521H534V516H535V525H536V528H537V517H538V507H539V538H540V519H541V540H542V512H543V519H544V519H545V509H546V535H547V504H548V531H549V531H550V517H551V533H552V499H553V487H554V514H555V512H556V480H557V505H558V515H559V479H560V518H561V500H562V512H563V466H564V459H565V470H566V494H567V490H568V520H569V533H570V497H571V520H572V514H573V518H574V516H575V533H576V518H577V526H578V523H579V513H580V504H581V508H582V507H583V505H584V535H585V526H586V525H587V512H588V534H589V502H590V507H591V511H592V534H593V502H594V505H595V516H596V519H597V521H598V500H599V535H600V536H601V536H602V508H603V507H604V504H605V507H606V520H607V505H608V515H609V507H610V510H611V515H612V513H613V522H614V516H615V536H616V520H617V512H618V517H619V523H620V521H621V519H622V507H623V519H624V470H625V469H626V490H627V505H628V526H629V506H630V539H631V540H632V530H633V533H634V541H635V541H636V532H637V525H638V522H639V531H640V541H641V544H642V535H643V532H644V517H645V529H646V531H647V532H648V531H649V536H650V529H651V528H652V525H653V528H654V543H655V521H656V518H657V499H658V508H659V513H660V522H661V508H662V499H663V502H664V508H665V535H666V536H667V528H668V501H669V495H670V509H671V502H672V495H673V532H674V517H675V510H676V514H677V532H678V508H679V496H680V490H681V532H682V528H683V522H684V521H685V507H686V507H687V502H688V484H689V534H690V486H691V519H692V476H693V509H694V531H695V504H696V504H697V458H698V470H699V531H700V504H701V528H702V458H703V460H704V480H705V511H706V509H707V509H708V491H709V502H710V500H711V514H712V515H713V497H714V528H715V529H716V507H717V500H718V509H719V531H720V523H721V503H722V530H723V523H724V507H725V508H726V506H727V502H728V505H729V503H730V500H731V503H732V507H733V472H734V501H735V519H736V462H737V519H738V498H739V460H740V498H741V468H742V513H743V493H744V480H745V477H746V518H747V510H748V508H749V505H750V510H751V504H752V527H753V525H754V515H755V540H756V520H757V520H758V529H759V541H760V527H761V531H762V525H763V529H764V524H765V544H766V523H767V525H768V478H769V519H770V517H771V480H772V515H773V507H774V525H775V528H776V477H777V501H778V498H779V526H780V516H781V507H782V505H783V517H784V528H785V510H786V536H787V536H788V535H789V528H790V536H791V509H792V513H793V520H794V523H795V519H796V512H797V510H798V521H799V511H800V525H801V526H802V502H803V537H804V508H805V515H806V512H807V515H808V517H809V492H810V499H811V519H812V539H813V529H814V525H815V523H816V510H817V513H818V508H819V511H820V515H821V471H822V480H823V496H824V496H825V499H826V503H827V512H828V520H829V515H830V511H831V515H832V482H833V514H834V512H835V512H836V509H837V485H838V517H839V536H840V539H841V522H842V517H843V516H844V499H845V502H846V516H847V509H848V513H849V513H850V511H851V529H852V522H853V504H854V518H855V503H856V507H857V524H858V504H859V530H860V539H861V539H862V505H863V508H864V527H865V521H866V508H867V504H868V518H869V537H870V548H871V548H872V520H873V543H874V531H875V513H876V536H877V501H878V512H879V531H880V527H881V517H882V520H883V508H884V486H885V502H886V474H887V482H888V458H889V459H890V468H891V481H892V478H893V488H894V492H895V482H896V492H897V492H898V480H899V492H900V501H901V495H902V488H903V509H904V507H905V498H906V503H907V530H908V492H909V511H910V490H911V507H912V528H913V521H914V521H915V523H916V537H917V540H918V535H919V523H920V524H921V542H922V537H923V522H924V516H925V520H926V525H927V536H928V516H929V512H930V525H931V507H932V520H933V518H934V539H935V525H936V531H937V530H938V530H939V534H940V541H941V537H942V520H943V537H944V540H945V537H946V502H947V503H948V529H949V480H950V515H951V514H952V492H953V502H954V529H955V524H956V488H957V510H958V526H959V526H960V515H961V527H962V479H963V490H964V500H965V494H966V488H967V505H968V511H969V518H970V524H971V527H972V534H973V531H974V503H975V513H976V518H977V533H978V522H979V523H980V517H981V535H982V529H983V505H984V499H985V505H986V507H987V506H988V507H989V505H990V510H991V511H992V508H993V496H994V525H995V525H996V529H997V480H998V491H999V490H1000V494H1001V505H1002V535H1003V528H1004V538H1005V523H1006V527H1007V511H1008V521H1009V519H1010V520H1011V517H1012V520H1013V537H1014V525H1015V527H1016V531H1017V508H1018V502H1019V513H1020V530H1021V505H1022V514H1023V515H1024V534H1025V529H1026V521H1027V527H1028V509H1029V516H1030V525H1031V507H1032V538H1033V542H1034V530H1035V511H1036V517H1037V511H1038V538H1039V534H1040V525H1041V530H1042V542H1043V527H1044V528H1045V542H1046V535H1047V533H1048V531H1049V547H1050V549H1051V517H1052V521H1053V532H1054V527H1055V536H1056V519H1057V522H1058V523H1059V510H1060V545H1061V538H1062V534H1063V534H1064V538H1065V531H1066V544H1067V606H1066V624H1065V622H1064V608H1063V613H1062V597H1061V596H1060V625H1059V626H1058V625H1057V624H1056V619H1055V596H1054V613H1053V623H1052V622H1051V616H1050V603H1049V606H1048V612H1047V612H1046V609H1045V616H1044V612H1043V622H1042V623H1041V625H1040V618H1039V623H1038V635H1037V628H1036V641H1035V633H1034V624H1033V639H1032V630H1031V617H1030V625H1029V620H1028V647H1027V651H1026V628H1025V635H1024V640H1023V629H1022V623H1021V630H1020V633H1019V627H1018V630H1017V637H1016V635H1015V641H1014V621H1013V630H1012V623H1011V626H1010V627H1009V635H1008V633H1007V642H1006V631H1005V627H1004V635H1003V633H1002V643H1001V644H1000V645H999V646H998V644H997V646H996V648H995V638H994V650H993V631H992V646H991V626H990V634H989V637H988V637H987V637H986V635H985V632H984V622H983V620H982V625H981V606H980V626H979V629H978V606H977V621H976V623H975V623H974V621H973V606H972V607H971V612H970V609H969V623H968V614H967V635H966V631H965V625H964V644H963V626H962V642H961V633H960V640H959V642H958V643H957V644H956V657H955V611H954V637H953V637H952V637H951V636H950V619H949V620H948V610H947V637H946V630H945V637H944V636H943V630H942V618H941V606H940V612H939V615H938V613H937V612H936V627H935V619H934V621H933V611H932V605H931V610H930V620H929V622H928V622H927V625H926V622H925V627H924V628H923V622H922V620H921V620H920V611H919V618H918V616H917V620H916V614H915V624H914V625H913V627H912V629H911V620H910V633H909V628H908V644H907V632H906V639H905V637H904V638H903V639H902V644H901V635H900V639H899V658H898V650H897V629H896V635H895V645H894V646H893V646H892V652H891V655H890V661H889V643H888V643H887V647H886V647H885V637H884V628H883V632H882V639H881V641H880V644H879V644H878V641H877V633H876V629H875V637H874V633H873V641H872V638H871V616H870V619H869V619H868V620H867V614H866V614H865V619H864V602H863V613H862V602H861V613H860V599H859V598H858V617H857V617H856V634H855V642H854V626H853V630H852V632H851V634H850V637H849V638H848V636H847V640H846V616H845V643H844V630H843V629H842V616H841V627H840V616H839V628H838V628H837V635H836V629H835V622H834V630H833V629H832V634H831V629H830V628H829V635H828V628H827V635H826V630H825V631H824V636H823V632H822V648H821V658H820V614H819V634H818V614H817V611H816V608H815V625H814V617H813V614H812V616H811V606H810V608H809V616H808V624H807V625H806V620H805V620H804V625H803V624H802V616H801V623H800V626H799V626H798V626H797V635H796V632H795V627H794V619H793V625H792V637H791V639H790V641H789V642H788V644H787V639H786V645H785V648H784V645H783V649H782V633H781V642H780V638H779V632H778V617H777V641H776V637H775V649H774V658H773V645H772V630H771V637H770V619H769V628H768V648H767V646H766V646H765V637H764V628H763V625H762V615H761V608H760V613H759V625H758V625H757V611H756V620H755V612H754V617H753V622H752V636H751V641H750V655H749V666H748V651H747V657H746V646H745V650H744V650H743V643H742V652H741V660H740V640H739V651H738V654H737V638H736V641H735V634H734V616H733V618H732V611H731V638H730V631H729V630H728V631H727V634H726V633H725V619H724V645H723V637H722V633H721V634H720V607H719V606H718V633H717V607H716V633H715V635H714V634H713V613H712V605H711V626H710V624H709V631H708V629H707V632H706V623H705V620H704V628H703V619H702V624H701V620H700V611H699V652H698V663H697V616H696V635H695V632H694V618H693V612H692V639H691V634H690V633H689V628H688V624H687V625H686V632H685V637H684V637H683V630H682V632H681V631H680V609H679V638H678V636H677V633H676V640H675V618H674V620H673V621H672V634H671V642H670V623H669V616H668V638H667V620H666V609H665V656H664V628H663V632H662V631H661V623H660V640H659V623H658V613H657V640H656V634H655V629H654V634H653V638H652V638H651V624H650V632H649V618H648V611H647V615H646V604H645V646H644V640H643V630H642V627H641V622H640V627H639V630H638V622H637V605H636V625H635V616H634V604H633V632H632V636H631V635H630V639H629V620H628V637H627V650H626V660H625V637H624V629H623V630H622V636H621V630H620V633H619V620H618V616H617V623H616V627H615V602H614V632H613V612H612V642H611V627H610V636H609V634H608V632H607V632H606V639H605V640H604V648H603V644H602V644H601V635H600V625H599V625H598V618H597V635H596V639H595V633H594V621H593V638H592V638H591V635H590V633H589V630H588V627H587V638H586V625H585V635H584V613H583V628H582V628H581V631H580V629H579V638H578V620H577V611H576V630H575V618H574V631H573V623H572V635H571V629H570V633H569V629H568V623H567V619H566V650H565V658H564V643H563V641H562V637H561V631H560V624H559V632H558V631H557V627H556V635H555V636H554V639H553V615H552V634H551V638H550V632H549V607H548V630H547V632H546V629H545V624H544V636H543V635H542V636H541V638H540V622H539V633H538V631H537V627H536V632H535V631H534V632H533V632H532V633H531V630H530V624H529V628H528V612H527V627H526V632H525V615H524V636H523V635H522V626H521V629H520V624H519V627H518V625H517V619H516V611H515V638H514V640H513V627H512V623H511V631H510V633H509V627H508V614H507V607H506V630H505V629H504V620H503V629H502V626H501V637H500V623H499V615H498V607H497V632H496V628H495V613H494V628H493V625H492V625H491V615H490V634H489V639H488V621H487V607H486V612H485V629H484V632H483V634H482V640H481V640H480V650H479V624H478V640H477V635H476V638H475V640H474V642H473V623H472V629H471V626H470V625H469V630H468V636H467V642H466V618H465V618H464V654H463V619H462V635H461V627H460V636H459V626H458V617H457V630H456V637H455V622H454V630H453V636H452V635H451V629H450V633H449V633H448V626H447V618H446V621H445V622H444V636H443V633H442V630H441V660H440V667H439V634H438V641H437V630H436V627H435V636H434V620H433V650H432V612H431V635H430V635H429V637H428V661H427V634H426V631H425V626H424V624H423V655H422V666H421V621H420V630H419V632H418V636H417V633H416V632H415V632H414V630H413V631H412V604H411V604H410V631H409V630H408V605H407V607H406V630H405V615H404V619H403V626H402V626H401V627H400V608H399V608H398V603H397V630H396V610H395V607H394V604H393V625H392V622H391V608H390V604H389V616H388V618H387V617H386V623H385V617H384V623H383Z" fill="#0e90cd"/>
<rect x="439" y="182" width="302" height="523" fill="rgb(190,222,247)" fill-opacity="0.4"/>
<g shape-rendering="geometricPrecision" fill="#ffffff">
<path d="M439 173H448.5L439 180.5Z"/>
<path d="M741 173H731.5L741 180.5Z"/>
<path d="M439 707.3V715H447.6Z"/>
<path d="M741 707.3V715H732.4Z"/>
</g>
<rect x="382" y="716" width="688" height="1" fill="#a9b4cb"/>
<rect x="439" y="717" width="302" height="25" fill="#8ba5c3"/>
<path d="M385.5 716V720M413.5 716V724M441.5 716V720M469.5 716V724M497.5 716V720M525.5 716V724M553.5 716V720M581.5 716V724M609.5 716V720M637.5 716V724M665.5 716V720M693.5 716V724M721.5 716V720M748.5 716V724M776.5 716V720M804.5 716V724M832.5 716V720M860.5 716V724M888.5 716V720M916.5 716V724M944.5 716V720M972.5 716V724M1000.5 716V720M1028.5 716V724M1056.5 716V720" stroke="#e6e6e4" stroke-width="1" fill="none"/>
<g font-size="10.3" fill="#cfd2d8" text-anchor="middle" shape-rendering="geometricPrecision">
<text x="469.8" y="738">1:00</text>
<text x="525.7" y="738">1:10</text>
<text x="581.6" y="738">1:20</text>
<text x="637.6" y="738">1:30</text>
<text x="693.5" y="738">1:40</text>
<text x="749.5" y="738">1:50</text>
<text x="805.5" y="738">2:00</text>
<text x="861.4" y="738">2:10</text>
<text x="917.3" y="738">2:20</text>
<text x="973.3" y="738">2:30</text>
<text x="1029.2" y="738">2:40</text>
</g>
<text x="383.5" y="736" font-size="11" letter-spacing="0.4" fill="#d6d8dc">hms</text>
<path d="M1070 190.5H1077M1070 432.5H1077M1070 203.5H1073M1070 419.5H1073M1070 215.5H1077M1070 407.5H1077M1070 225.5H1073M1070 397.5H1073M1070 235.5H1077M1070 387.5H1077M1070 243.5H1073M1070 379.5H1073M1070 251.5H1077M1070 372.5H1077M1070 257.5H1073M1070 365.5H1073M1070 263.5H1073M1070 359.5H1073M1070 268.5H1073M1070 354.5H1073M1070 273.5H1077M1070 349.5H1077M1070 277.5H1073M1070 345.5H1073M1070 281.5H1073M1070 341.5H1073M1070 284.5H1073M1070 338.5H1073M1070 287.5H1073M1070 335.5H1073M1070 289.5H1073M1070 333.5H1073M1070 292.5H1077M1070 330.5H1077M1070 311.5H1077M1070 455.5H1077M1070 697.5H1077M1070 468.5H1073M1070 684.5H1073M1070 480.5H1077M1070 672.5H1077M1070 490.5H1073M1070 661.5H1073M1070 500.5H1077M1070 652.5H1077M1070 508.5H1073M1070 644.5H1073M1070 516.5H1077M1070 637.5H1077M1070 522.5H1073M1070 630.5H1073M1070 528.5H1073M1070 624.5H1073M1070 533.5H1073M1070 619.5H1073M1070 538.5H1077M1070 614.5H1077M1070 542.5H1073M1070 610.5H1073M1070 545.5H1073M1070 606.5H1073M1070 549.5H1073M1070 603.5H1073M1070 552.5H1073M1070 600.5H1073M1070 554.5H1073M1070 597.5H1073M1070 556.5H1077M1070 595.5H1077M1070 576.5H1077" stroke="#d6d8dc" stroke-width="1" fill="none"/>
<g font-size="10.3" fill="#d3d5da" shape-rendering="geometricPrecision">
<text x="1081.5" y="194.0">0</text>
<text x="1081.5" y="436.0">0</text>
<text x="1081.5" y="219.0">-2</text>
<text x="1081.5" y="411.0">-2</text>
<text x="1081.5" y="239.0">-4</text>
<text x="1081.5" y="391.0">-4</text>
<text x="1081.5" y="255.0">-6</text>
<text x="1081.5" y="376.0">-6</text>
<text x="1081.5" y="277.0">-10</text>
<text x="1081.5" y="353.0">-10</text>
<text x="1081.5" y="296.0">-16</text>
<text x="1081.5" y="334.0">-16</text>
<text x="1081.5" y="315.0">-∞</text>
<text x="1081.5" y="459.0">0</text>
<text x="1081.5" y="701.0">0</text>
<text x="1081.5" y="484.0">-2</text>
<text x="1081.5" y="676.0">-2</text>
<text x="1081.5" y="504.0">-4</text>
<text x="1081.5" y="656.0">-4</text>
<text x="1081.5" y="520.0">-6</text>
<text x="1081.5" y="641.0">-6</text>
<text x="1081.5" y="542.0">-10</text>
<text x="1081.5" y="618.0">-10</text>
<text x="1081.5" y="560.0">-16</text>
<text x="1081.5" y="599.0">-16</text>
<text x="1081.5" y="580.0">-∞</text>
<text x="1081.7" y="170" font-size="10.8">dB</text>
</g>
</svg>
</body></html>
